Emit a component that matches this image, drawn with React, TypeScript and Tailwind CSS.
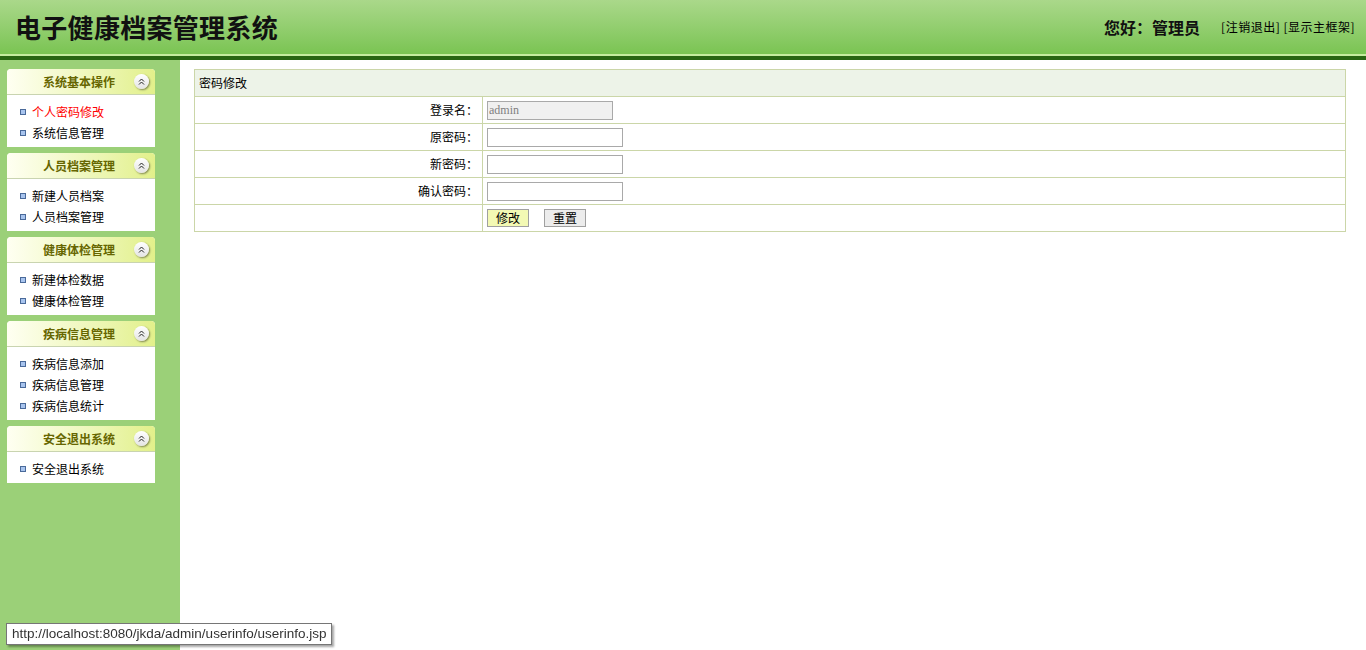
import React from 'react';

interface MenuGroup {
  title: string;
  items: { name: string; active?: boolean }[];
}

const menuGroups: MenuGroup[] = [
  { title: '系统基本操作', items: [{ name: '个人密码修改', active: true }, { name: '系统信息管理' }] },
  { title: '人员档案管理', items: [{ name: '新建人员档案' }, { name: '人员档案管理' }] },
  { title: '健康体检管理', items: [{ name: '新建体检数据' }, { name: '健康体检管理' }] },
  { title: '疾病信息管理', items: [{ name: '疾病信息添加' }, { name: '疾病信息管理' }, { name: '疾病信息统计' }] },
  { title: '安全退出系统', items: [{ name: '安全退出系统' }] },
];

const font = "font-['Noto_Sans_CJK_SC','Noto_Sans',sans-serif]";

// little round "collapse" button in each menu header
const CollapseIcon = () => (
  <span className="w-[15px] h-[15px] rounded-full bg-gradient-to-b from-white to-[#e4e4e4] shadow-[1px_1px_2px_rgba(0,0,0,0.45)] flex items-center justify-center">
    <svg width="7" height="7" viewBox="0 0 7 7" fill="none" stroke="#222" strokeWidth="1">
      <path d="M1 3.5L3.5 1L6 3.5M1 6.5L3.5 4L6 6.5" />
    </svg>
  </span>
);

const Sidebar = () => (
  <div className="w-[180px] shrink-0 bg-[#9bd078] pt-[9px] pl-[7px] flex flex-col gap-[6px]">
    {menuGroups.map((group) => (
      <div key={group.title} className="w-[148px] bg-white rounded-t-[4px]">
        <div className="h-[26px] flex items-center rounded-t-[4px] bg-gradient-to-r from-[#fffff2] to-[#e2f08a] border-b border-[#c9d4b0] relative">
          <span className="w-full text-center pr-[4px] text-[12px] font-bold text-[#666600]">{group.title}</span>
          <span className="absolute right-[6px] top-[5px]">
            <CollapseIcon />
          </span>
        </div>
        <ul className="pt-[6px] pb-[4px]">
          {group.items.map((item) => (
            <li key={item.name} className="h-[21px] flex items-center pl-[13px] gap-[6px]">
              <span className="w-[6px] h-[6px] border border-[#4a6a9a] bg-[#a8c4ee]" />
              <span className={`text-[12px] ${item.active ? 'text-[#ff0000]' : 'text-black'}`}>{item.name}</span>
            </li>
          ))}
        </ul>
      </div>
    ))}
  </div>
);

const rows = [
  { label: '登录名：', kind: 'readonly' },
  { label: '原密码：', kind: 'input' },
  { label: '新密码：', kind: 'input' },
  { label: '确认密码：', kind: 'input' },
];

const PasswordForm = () => (
  <table className="w-full border-collapse text-[12px] text-black">
    <tbody>
      <tr className="h-[27px] bg-[#edf3e8]">
        <td colSpan={2} className="border border-[#cbd6a8] pl-[4px]">密码修改</td>
      </tr>
      {rows.map((row) => (
        <tr key={row.label} className="h-[27px]">
          <td className="w-[288px] border border-[#cbd6a8] text-right pr-[4px]">{row.label}</td>
          <td className="border border-[#cbd6a8] pl-[4px]">
            {row.kind === 'readonly' ? (
              <input
                readOnly
                value="admin"
                className="block w-[126px] h-[19px] border border-[#a9a9a9] bg-[#f0f0f0] text-[#808080] text-[12px] px-[1px] font-['Liberation_Serif',serif] outline-none"
              />
            ) : (
              <input type="password" className="block w-[136px] h-[19px] border border-[#a9a9a9] bg-white outline-none" />
            )}
          </td>
        </tr>
      ))}
      <tr className="h-[27px]">
        <td className="border border-[#cbd6a8]"></td>
        <td className="border border-[#cbd6a8] pl-[4px]">
          <div className="flex items-center gap-[15px]">
            <button className="w-[42px] h-[18px] border border-[#a0a0a0] bg-[#f3f9b4] text-[12px] leading-none">修改</button>
            <button className="w-[42px] h-[18px] border border-[#a0a0a0] bg-[#ececec] text-[12px] leading-none">重置</button>
          </div>
        </td>
      </tr>
    </tbody>
  </table>
);

export default function App() {
  return (
    <div className={`h-screen flex flex-col overflow-hidden bg-white ${font}`}>
      {/* Top banner */}
      <div className="h-[54px] shrink-0 bg-gradient-to-b from-[#aad88a] to-[#7ac452] flex items-center justify-between pl-[15px] pr-[11px]">
        <h1 className="text-[26px] font-bold text-[#111] tracking-[0.3px] pb-[2px]">电子健康档案管理系统</h1>
        <div className="flex items-center gap-[21px] pb-[1px]">
          <span className="text-[16px] font-bold text-[#111]">您好：管理员</span>
          <span className="text-[12px] text-black tracking-[0.5px]">[注销退出] [显示主框架]</span>
        </div>
      </div>
      <div className="h-[2px] shrink-0 bg-[#c4ec9e]" />
      <div className="h-[4px] shrink-0 bg-[#286612]" />

      <div className="flex flex-1 min-h-0">
        <Sidebar />
        <main className="flex-1 pt-[9px] pl-[14px] pr-[20px]">
          <PasswordForm />
        </main>
      </div>

      {/* browser status tooltip */}
      <div className="fixed left-[6px] bottom-[5px] h-[22px] px-[5px] flex items-center bg-white border border-[#767676] shadow-[2px_2px_2px_rgba(0,0,0,0.35)] text-[13.5px] text-[#333] font-['Liberation_Sans',sans-serif]">
        http://localhost:8080/jkda/admin/userinfo/userinfo.jsp
      </div>
    </div>
  );
}
